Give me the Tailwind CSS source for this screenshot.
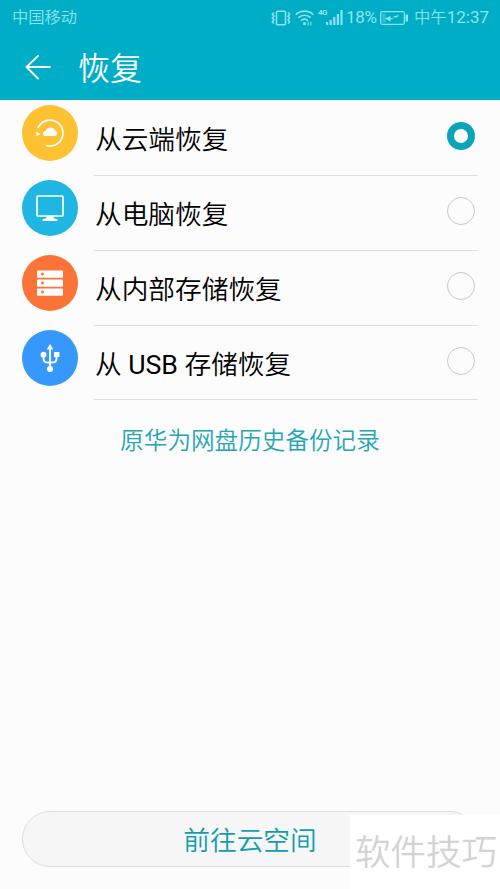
<!DOCTYPE html>
<html lang="zh-CN">
<head>
    <meta charset="UTF-8">
    <meta name="viewport" content="width=device-width, initial-scale=1.0">
    <title>恢复</title>
    <script src="https://cdn.jsdelivr.net/npm/@tailwindcss/browser@4"></script>
</head>
<body class="bg-[#fcfcfc] font-[Roboto,'Noto_Sans_CJK_SC',sans-serif] text-black">
<div class="relative flex h-[889px] w-[500px] flex-col overflow-hidden whitespace-nowrap">

    <!-- Header -->
    <header class="h-[100px] shrink-0 bg-[#00adc6]">
        <div class="flex h-[35px] items-center pl-3 pr-[11px] text-[16.3px] leading-[35px] text-[#8fe3ee]">
            <span class="font-[350]">中国移动</span>
            <svg class="ml-auto mr-[4px] shrink-0" width="20" height="16" viewBox="0 0 20 16" fill="none" stroke="currentColor" stroke-width="1.5">
                <rect x="5.5" y="1.2" width="9" height="13.6" rx="1"/>
                <path d="M3 2.5 1.3 4.3 3 6.2 1.3 8 3 9.8 1.3 11.7 3 13.5M17 2.5l1.7 1.8L17 6.2 18.7 8 17 9.8l1.7 1.9L17 13.5"/>
            </svg>
            <svg class="mr-[4px] shrink-0" width="19" height="16" viewBox="0 0 18 15" fill="none" stroke="currentColor" stroke-width="1.6">
                <path d="M.7 4.2C5.4-.2 12.6-.2 17.3 4.2M3.2 7.2c3.4-3.1 8.2-3.1 11.6 0M5.8 10.1c1.9-1.700 4.500-1.700 6.400 0"/>
                <circle cx="9" cy="12.9" r="1.5" fill="currentColor" stroke="none"/>
                <path d="M12.500 11v3.500M15 14.500V11" stroke-width="1"/>
            </svg>
            <span class="-mt-[10px] w-[9px] text-[8px] font-bold leading-none tracking-[-.7px]">4G</span>
            <svg class="mr-[3px] -ml-px shrink-0" width="17" height="15" viewBox="0 0 17 15" fill="currentColor">
                <path d="M0 12h2.200v3H0zM3.600 10h2.200v5H3.600zM7.200 7h2.200v8H7.200zM10.800 4H13v11h-2.200zM14.400 0h2.200v15h-2.200z"/>
            </svg>
            <span class="w-[31px] text-[17px] tracking-[-.3px]">18%</span>
            <svg class="ml-[3px] mr-[6px] shrink-0" width="28" height="14" viewBox="0 0 28 14">
                <rect x=".7" y=".7" width="23.6" height="12.6" rx="1.5" fill="none" stroke="currentColor" stroke-width="1.2"/>
                <path d="M25.500 3.500H28v7h-2.500z" fill="currentColor"/>
                <path d="M2.300 2.500h3.500v9H2.300z" fill="currentColor" opacity=".35"/>
                <path d="m5 7.500 5.500 3V8.300l3.500-.3-2-1-1.500.2V5zM13 5.500l6-1.500-2 2.500h-3z" fill="currentColor"/>
            </svg>
            <span class="font-[350]">中午<span class="text-[17px] font-normal">12:37</span></span>
        </div>
        <div class="flex h-[65px] items-center pl-[25px] text-white">
            <svg class="mr-[27px] shrink-0" width="26" height="26" viewBox="0 0 26 26" fill="none" stroke="currentColor" stroke-width="1.8" stroke-linecap="round" stroke-linejoin="round">
                <path d="M25 12H1.500M13 .9 1.500 12 13 23.500"/>
            </svg>
            <h1 class="pt-[3px] text-[32px] font-[350] leading-[65px]">恢复</h1>
        </div>
    </header>

    <!-- Restore sources -->
    <ul class="px-[22px] font-[350]">
        <li class="flex h-[76px]">
            <svg class="mt-[5px] mr-4 shrink-0" width="56" height="56" viewBox="0 0 56 56">
                <circle cx="28" cy="28" r="28" fill="#fdc132"/>
                <path d="M16 23A13 13 0 1 1 24 40.500" fill="none" stroke="#fff" stroke-width="1.700"/>
                <path d="m14 26.500 4.500 2.500-4 2.500z" fill="#fff"/>
                <path d="M23.500 31a2.600 2.600 0 0 1 .2-5.200 5 5 0 0 1 9.300-.3 2.900 2.900 0 0 1 .4 5.500z" fill="#fff"/>
            </svg>
            <div class="flex flex-1 justify-between border-b border-[#dedede]">
                <span class="pt-[5px] pl-px text-[26.7px] leading-[70px]">从云端恢复</span>
                <span class="mt-[22px] mr-[3px] size-7 rounded-full border-[7px] border-[#0ba5b9] bg-white"></span>
            </div>
        </li>
        <li class="flex h-[75px]">
            <svg class="mt-[4px] mr-4 shrink-0" width="56" height="56" viewBox="0 0 56 56">
                <circle cx="28" cy="28" r="28" fill="#1fb6e2"/>
                <rect x="15" y="16" width="26" height="20" rx="1" fill="none" stroke="#fff" stroke-width="1.7"/>
                <path d="M24.500 36h7v2l4 1.500V41h-15v-1.500l4-1.500z" fill="#fff"/>
            </svg>
            <div class="flex flex-1 justify-between border-b border-[#dedede]">
                <span class="pt-[4px] pl-px text-[26.7px] leading-[70px]">从电脑恢复</span>
                <span class="mt-[21px] mr-[3px] size-7 rounded-full border-[1.5px] border-[#c8c8c8]"></span>
            </div>
        </li>
        <li class="flex h-[75px]">
            <svg class="mt-[4px] mr-4 shrink-0" width="56" height="56" viewBox="0 0 56 56">
                <circle cx="28" cy="28" r="28" fill="#f97436"/>
                <g fill="#fff">
                    <rect x="15" y="15.500" width="26" height="7.200" rx="1"/>
                    <rect x="15" y="24.500" width="26" height="7.200" rx="1"/>
                    <rect x="15" y="33.500" width="26" height="7.200" rx="1"/>
                </g>
                <g fill="#f97436">
                    <circle cx="20.500" cy="19" r="1.500"/>
                    <circle cx="20.500" cy="28" r="1.500"/>
                    <circle cx="20.500" cy="37" r="1.500"/>
                </g>
            </svg>
            <div class="flex flex-1 justify-between border-b border-[#dedede]">
                <span class="pt-[4px] pl-px text-[26.7px] leading-[70px]">从内部存储恢复</span>
                <span class="mt-[21px] mr-[3px] size-7 rounded-full border-[1.5px] border-[#c8c8c8]"></span>
            </div>
        </li>
        <li class="flex h-[74px]">
            <svg class="mt-[4px] mr-4 shrink-0" width="56" height="56" viewBox="0 0 56 56">
                <circle cx="28" cy="28" r="28" fill="#3798fb"/>
                <path d="M28 18v21M21.500 26v2.500q0 4 4 4h5q4 0 4-4V25" fill="none" stroke="#fff" stroke-width="1.800"/>
                <path d="m28 14 3.300 5.500h-6.600zM32 22h5.400v5H32z" fill="#fff"/>
                <circle cx="21.500" cy="24.700" r="2.900" fill="#fff"/>
                <circle cx="28" cy="39" r="3" fill="#fff"/>
            </svg>
            <div class="flex flex-1 justify-between border-b border-[#dedede]">
                <span class="pt-[4px] pl-px text-[26.7px] leading-[70px]">从 <span class="font-normal">USB</span> 存储恢复</span>
                <span class="mt-[21px] mr-[3px] size-7 rounded-full border-[1.5px] border-[#c8c8c8]"></span>
            </div>
        </li>
    </ul>

    <a href="#" class="mt-[21px] text-center text-[23.6px] font-[350] leading-10 text-[#24a5b5]">原华为网盘历史备份记录</a>

    <button class="mx-[22px] mt-auto mb-[22px] h-14 shrink-0 rounded-full border border-[#dedede] bg-[#f6f6f6] pt-[5px] text-[26.7px] font-[350] leading-[49px] text-[#129eae]">前往云空间</button>

    <!-- Watermark -->
    <div class="absolute right-0 bottom-0 h-[74px] w-[150px] bg-white pt-px pl-[5px] text-[35.5px] font-[350] leading-[74px] text-[#d3d3d3]">软件技巧</div>
</div>
</body>
</html>
